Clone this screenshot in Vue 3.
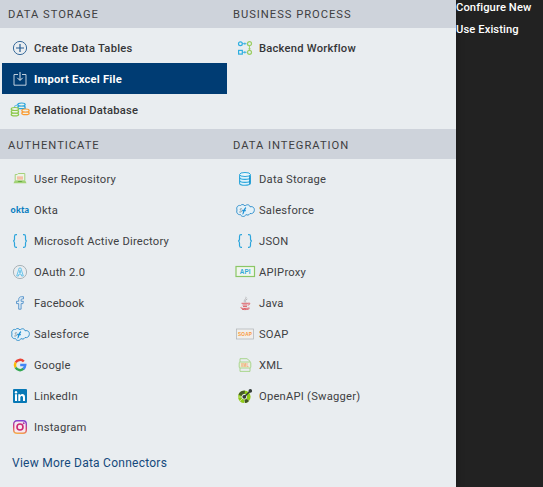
<script setup>
const salesforce = `<path d="M2 7C1 4 3 2 5.500 2.500C7 .8 9 1.500 10 3C12 1 14.500 1.500 15 3.800C18 3 19.700 5 19.300 7.500C19 10 17 11 15 10.500C14 12.500 12 12.300 11 11.500C10 14 6.500 14.200 5.500 11.600C3 12 1 10 2 7Z" fill="#e4f1f8" stroke="#2589c8" stroke-width=".9"/><path d="M4.200 9h1.900c1.400-1.200-1.600-1.800-.7-3.200h1.500" fill="none" stroke="#8e9da6"/><path d="M7.500 11c1.300 0 1.200-5.500 3.500-6.400M7.200 7.500h3.600" fill="none" stroke="#1e91d5" stroke-width="1.300"/>`
const braces = `<path d="M7 .7H6Q4.500.7 4.500 2.500V5Q4.500 7 3 7Q4.500 7 4.500 9v2.500Q4.500 13.300 6 13.300h1M13 .7h1Q15.500.7 15.500 2.500V5Q15.500 7 17 7Q15.500 7 15.500 9v2.500Q15.500 13.300 14 13.300h-1" fill="none" stroke="#2ca5dc" stroke-width="1.200"/>`

// A stack of discs, drawn bottom to top so that each one overlaps the one below
function discs(x, y, color, count) {
  let out = ''
  for (let i = count - 1; i >= 0; i--) {
    out += `<ellipse cx="${x}" cy="${y + i * 2.7}" rx="3.700" ry="1.500" fill="#edf2ea" stroke="${color}" stroke-width="1.200"/>`
  }
  return out
}

const icons = {
  plus: `<circle cx="10" cy="7" r="6.600" fill="none" stroke="#245b91" stroke-width=".9"/><path d="M10 3v8M6 7h8" stroke="#245b91" stroke-width="1.200"/>`,
  import: `<path d="M8 2.500H4v10.700h12V2.500h-4" fill="none" stroke="#d4dfe9" stroke-width=".9"/><path d="M10 0v8M7.300 5.800L10 8.500l2.700-2.700" fill="none" stroke="#e1e9f0" stroke-width="1"/>`,
  databases: `<path d="M4 3.500L8 1.500M14 4.500l2 1.500" stroke="#2ba5dd" stroke-width=".8"/>` + discs(11.5, 1.5, '#2ba5dd', 2) + discs(4.9, 6, '#8cc84b', 3) + discs(15.5, 7.5, '#fa9a32', 2),
  repository: `<path d="M5.200 8.800V2.500h2l1-1h6.600v7.300z" fill="#edf4e7" stroke="#a5d17b"/><path d="M7 4.500h6v3H7z" fill="#f6af91"/><path d="M7 6h6" stroke="#f3e5da" stroke-width=".6"/><path d="M4.500 9h11l1 2.200h-13z" fill="#a2d375"/><path d="M8.500 9l-1 1h5l-1-1z" fill="#68a945"/>`,
  okta: `<text x="10" y="9.500" text-anchor="middle" font-family="Lato,sans-serif" font-size="9.500" font-weight="900" textLength="18.800" lengthAdjust="spacingAndGlyphs" fill="#087dc1">okta</text>`,
  braces,
  oauth: `<circle cx="10" cy="7" r="6.600" fill="none" stroke="#a2abb0" stroke-width=".9"/><path d="M6.700 11L9.200 3h1.600l2.500 8h-1.700l-.6-2H9l-.6 2zM9.300 7.500h1.400L10 5.200z" fill="#e3f4fb" stroke="#51b9e4" stroke-width=".8"/>`,
  facebook: `<path d="M8.700 13.200V7.600H6.500V5.300h2.200V3.600C8.700 1.500 10 .7 11.500.7h2v2.200h-1.400c-.8 0-1 .4-1 1.100v1.300h2.300l-.4 2.300h-1.900v5.600z" fill="#e0ecf5" stroke="#5191c9" stroke-width=".9"/>`,
  salesforce,
  google: `<g fill="none" stroke-width="2.500"><path d="M5.600 4.500A5.100 5.100 0 0 1 13.800 3.500" stroke="#ea4335"/><path d="M5.600 9.500A5.100 5.100 0 0 1 5.600 4.500" stroke="#fbbc05"/><path d="M13.600 10.700A5.100 5.100 0 0 1 5.600 9.500" stroke="#34a853"/><path d="M10.200 7.100h5Q15 9.500 13.300 11" stroke="#4285f4"/></g>`,
  linkedin: `<rect x="3" width="14" height="14" rx="1" fill="#0879b6"/><path d="M5 5.300h2V12H5zM8.300 5.300h1.900v1c1.300-2 4.800-1.500 4.800 1.700v4h-2V8.500c0-2.200-2.700-2-2.700 0V12h-2z" fill="#fff"/><circle cx="6" cy="3.300" r="1.200" fill="#fff"/>`,
  instagram: `<defs><linearGradient id="ig" x1="0" y1="1" x2=".15" y2="0"><stop stop-color="#f6b34b"/><stop offset=".5" stop-color="#d83b75"/><stop offset="1" stop-color="#8440cf"/></linearGradient></defs><rect x="3.700" y=".7" width="12.600" height="12.600" rx="3.200" fill="#f6e9ef" stroke="url(#ig)" stroke-width="1.400"/><circle cx="10" cy="7" r="3" fill="none" stroke="#cc2874" stroke-width="1.600"/><circle cx="13.700" cy="3.300" r="1" fill="#a932a5"/>`,
  workflow: `<g fill="none" stroke-width="1.200"><g stroke="#2caee0"><circle cx="5.400" cy="2.700" r="1.900"/><rect x="3.600" y="9.400" width="3.700" height="3.700"/><path d="M7.500 2.700h4M7.500 11.300h4" stroke-width=".9"/><path d="M9.800 1.500v2.400M9.800 10v2.500" stroke-width=".7"/></g><g stroke="#9bce62"><circle cx="14.500" cy="2.700" r="2"/><circle cx="14.500" cy="11.300" r="2"/><path d="M14.500 5v4M13.300 7.800h2.400" stroke-width=".9"/></g></g>`,
  storage: `<path d="M4.600 2.500v8.700c0 2.700 10.800 2.700 10.800 0V2.500" fill="#dff2fb" stroke="#2ba6db" stroke-width="1.100"/><ellipse cx="10" cy="2.500" rx="5.400" ry="2" fill="#edf7fb" stroke="#2ba6db"/><path d="M4.600 5.500c0 2.500 10.800 2.500 10.800 0M4.600 8.500c0 2.500 10.800 2.500 10.800 0" fill="none" stroke="#2ba6db" stroke-width="1.100"/><path d="M14.700 4v8" stroke="#168bc6"/>`,
  api: `<rect x="1" y="1.500" width="18.500" height="10" fill="#f0f5ee" stroke="#8bc766" stroke-width="1.200"/><text x="10.200" y="9" text-anchor="middle" font-family="Liberation Sans,sans-serif" font-size="6.800" font-weight="700" textLength="11" lengthAdjust="spacingAndGlyphs" fill="#32a9d8">API</text>`,
  java: `<path d="M10.800.8C12 2.700 8 4 9.600 6.300M12.300 3C10.200 4 10.300 5 10.900 6.500" fill="none" stroke="#aaa9ac" stroke-width=".8"/><path d="M6.500 7.300h6.600c2-.9 2.600 1 0 1.800M7.500 9h5M8 10.600h4M6.300 11.300c-3 1.300 7 1.800 8 .2M7 13.300c3 .6 6 .3 7.500-.7" fill="none" stroke="#dc5b62" stroke-width=".95"/>`,
  soap: `<rect x="1.500" y="2" width="17" height="10" fill="#f1efec" stroke="#b4b9bd" stroke-width=".8"/><text x="10" y="8.900" text-anchor="middle" font-family="Liberation Sans,sans-serif" font-size="5.600" font-weight="700" textLength="14" lengthAdjust="spacingAndGlyphs" fill="#fa9838">SOAP</text>`,
  xml: `<path d="M5 4V.7h7l3 2.500V4M5 10v3.400h10V10" fill="none" stroke="#a3d285" stroke-width=".9"/><rect x="4.200" y="4" width="11.600" height="6" rx="1" fill="#e9f0dd" stroke="#a3d285" stroke-width=".9"/><text x="10" y="8.800" text-anchor="middle" font-family="Liberation Sans,sans-serif" font-size="4.800" font-weight="700" textLength="8" lengthAdjust="spacingAndGlyphs" fill="#f4a066">XML</text>`,
  swagger: `<circle cx="9.300" cy="7.800" r="4.500" fill="none" stroke="#90ca18" stroke-width="3.600"/><path d="M3 8h4M5 12l2.500-2.500M9.500 11v3M5 4l2.500 2.500M12 10.500l2.500 2" stroke="#edf2e5" stroke-width=".6"/><path d="M3.500 5.500A6 6 0 0 1 10 1.800l-.4 3A3 3 0 0 0 6.500 7z" fill="#465b2b"/><path d="M9.500 11l.5 3a6 6 0 0 0 4-2L12 10z" fill="#405126"/><path d="M9.300 7.800l5.500-5.300" stroke="#343b39" stroke-width="1.400"/><circle cx="9.300" cy="7.800" r="1.900" fill="#343b39"/><circle cx="15.300" cy="1.900" r="1.800" fill="#343b39"/>`,
}

const groups = [
  {
    title: 'DATA STORAGE',
    strong: true,
    items: [
      { name: 'Create Data Tables', icon: 'plus' },
      { name: 'Import Excel File', icon: 'import', selected: true },
      { name: 'Relational Database', icon: 'databases' },
    ],
  },
  { title: 'BUSINESS PROCESS', strong: true, items: [{ name: 'Backend Workflow', icon: 'workflow' }] },
  {
    title: 'AUTHENTICATE',
    items: [
      { name: 'User Repository', icon: 'repository' },
      { name: 'Okta', icon: 'okta' },
      { name: 'Microsoft Active Directory', icon: 'braces' },
      { name: 'OAuth 2.0', icon: 'oauth' },
      { name: 'Facebook', icon: 'facebook' },
      { name: 'Salesforce', icon: 'salesforce' },
      { name: 'Google', icon: 'google' },
      { name: 'LinkedIn', icon: 'linkedin' },
      { name: 'Instagram', icon: 'instagram' },
    ],
    more: 'View More Data Connectors',
  },
  {
    title: 'DATA INTEGRATION',
    items: [
      { name: 'Data Storage', icon: 'storage' },
      { name: 'Salesforce', icon: 'salesforce' },
      { name: 'JSON', icon: 'braces' },
      { name: 'APIProxy', icon: 'api' },
      { name: 'Java', icon: 'java' },
      { name: 'SOAP', icon: 'soap' },
      { name: 'XML', icon: 'xml' },
      { name: 'OpenAPI (Swagger)', icon: 'swagger' },
    ],
  },
]
</script>

<template>
  <main class="screen">
    <nav class="panel">
      <section v-for="group in groups" :key="group.title" class="group">
        <h2>{{ group.title }}</h2>
        <ul :class="{ strong: group.strong }">
          <li v-for="item in group.items" :key="item.name" :class="{ selected: item.selected }">
            <svg class="icon" viewBox="0 0 20 14" v-html="icons[item.icon]"></svg>
            <span class="name">{{ item.name }}</span>
          </li>
        </ul>
        <a v-if="group.more" class="more">{{ group.more }}</a>
      </section>
    </nav>
    <aside class="submenu">
      <a>Configure New</a>
      <a>Use Existing</a>
    </aside>
  </main>
</template>

<style>
body {
  background: #222;
}
</style>

<style scoped>
.screen {
  display: flex;
  width: 543px;
  height: 487px;
  overflow: hidden;
  background: #222;
  font-family: Roboto, sans-serif;
}
.panel {
  display: grid;
  grid-template-columns: 225px 231px;
  grid-template-rows: 129px 358px;
  width: 456px;
  background: #e9edf0;
  box-shadow: 0 0 8px rgba(0, 0, 0, 0.3);
}
h2 {
  box-sizing: border-box;
  height: 30px;
  margin: 0;
  padding-left: 8px;
  background: #ced3db;
  color: #3f4042;
  font-size: 11.2px;
  font-weight: 400;
  line-height: 34px;
  letter-spacing: 0.98px;
}
.group:nth-child(-n + 2) h2 {
  height: 28px;
  line-height: 30px;
}
ul {
  margin: 0;
  padding: 4px 0 0 2px;
  list-style: none;
}
li {
  display: flex;
  align-items: center;
  gap: 4px;
  box-sizing: border-box;
  width: 225px;
  height: 31px;
  padding-left: 8px;
  color: #404143;
  font-size: 11.2px;
  letter-spacing: 0.23px;
  white-space: nowrap;
}
.name {
  padding-top: 2px;
}
.strong li {
  color: #353638;
  font-weight: 500;
}
.strong li.selected {
  background: #003c73;
  color: #fff;
  font-weight: 700;
}
.icon {
  flex: none;
  width: 20px;
  height: 14px;
  overflow: visible;
}
.more {
  display: block;
  padding: 13px 0 0 12px;
  color: #154a7c;
  font-size: 12px;
  line-height: 16px;
  letter-spacing: 0.25px;
}
.submenu {
  display: flex;
  flex-direction: column;
  color: #fff;
  font-size: 11.2px;
  font-weight: 500;
  line-height: 22px;
  letter-spacing: 0.1px;
  margin-top: -3px;
}
</style>
